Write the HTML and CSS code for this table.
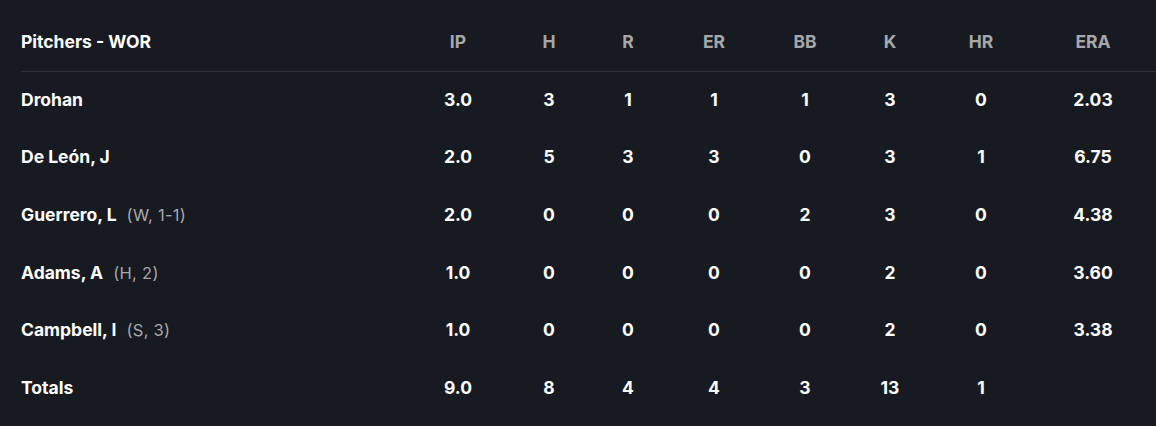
FILE: index.html
```html
<!DOCTYPE html>
<html>
<head>
<meta charset="utf-8">
<link rel="stylesheet" href="styles.css">
</head>
<body>
<div class="box">
  <div class="row head">
    <div class="name">Pitchers - WOR</div>
    <div>IP</div><div>H</div><div>R</div><div>ER</div><div>BB</div><div>K</div><div>HR</div><div>ERA</div>
  </div>
  <div class="row">
    <div class="name">Drohan</div>
    <div>3.0</div><div>3</div><div>1</div><div>1</div><div>1</div><div>3</div><div>0</div><div>2.03</div>
  </div>
  <div class="row">
    <div class="name">De León, J</div>
    <div>2.0</div><div>5</div><div>3</div><div>3</div><div>0</div><div>3</div><div>1</div><div>6.75</div>
  </div>
  <div class="row">
    <div class="name">Guerrero, L<span class="note">(W, 1-1)</span></div>
    <div>2.0</div><div>0</div><div>0</div><div>0</div><div>2</div><div>3</div><div>0</div><div>4.38</div>
  </div>
  <div class="row">
    <div class="name">Adams, A<span class="note">(H, 2)</span></div>
    <div>1.0</div><div>0</div><div>0</div><div>0</div><div>0</div><div>2</div><div>0</div><div>3.60</div>
  </div>
  <div class="row">
    <div class="name">Campbell, I<span class="note">(S, 3)</span></div>
    <div>1.0</div><div>0</div><div>0</div><div>0</div><div>0</div><div>2</div><div>0</div><div>3.38</div>
  </div>
  <div class="row">
    <div class="name">Totals</div>
    <div>9.0</div><div>8</div><div>4</div><div>4</div><div>3</div><div>13</div><div>1</div><div></div>
  </div>
</div>
</body>
</html>
```
FILE: styles.css
```css
html, body {
  margin: 0;
  padding: 0;
  background: #171a21;
}
body {
  width: 1156px;
  height: 426px;
  overflow: hidden;
  font-family: "Inter", "Liberation Sans", sans-serif;
  color: #ffffff;
}
.box {
  padding-left: 21px;
}
.row {
  display: grid;
  grid-template-columns: 392px 90px 92px 66px 106px 76px 94px 88px 136px;
  align-items: center;
  height: 57.6px;
  padding-bottom: 3px;
  box-sizing: border-box;
  font-size: 17.5px;
  font-weight: 700;
}
.row > div {
  text-align: center;
  white-space: nowrap;
}
.row > .name {
  text-align: left;
}
.head {
  height: 72px;
  padding-top: 12px;
  padding-bottom: 0;
  border-bottom: 1px solid #2d313a;
  color: #a6a7a9;
}
.head .name {
  color: #ffffff;
}
.note {
  font-size: 16.5px;
  font-weight: 400;
  color: #a6a7a9;
  margin-left: 10px;
  letter-spacing: 0.3px;
}
```
